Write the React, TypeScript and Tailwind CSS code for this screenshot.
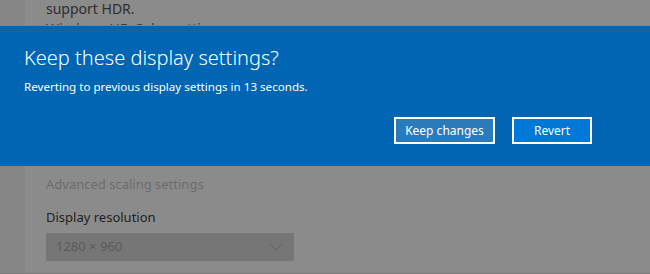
import React from 'react';

const font = { fontFamily: '"Segoe UI", "Noto Sans", "Open Sans", sans-serif' };

const Strip: React.FC<{ children: React.ReactNode; className?: string }> = ({ children, className }) => (
  <div className={`flex ${className ?? ''}`}>
    <div className="w-[25px] shrink-0 bg-[#868686]" />
    <div className="flex-1 bg-[#8b8b8b] pl-[21px] overflow-hidden">{children}</div>
  </div>
);

export default function App() {
  return (
    <div className="w-[650px] h-[274px] flex flex-col overflow-hidden bg-[#8b8b8b]" style={font}>
      {/* page behind the dialog, top part (second line is hidden under the band) */}
      <Strip className="h-[25px]">
        <p className="text-[14px] leading-[19px] text-[#2e2e2e] -mt-[1px]">support HDR.</p>
        <p className="text-[14px] leading-[19px] text-[#3a3a3a] mt-[1px]">Windows HD Color settings</p>
      </Strip>

      {/* dialog band */}
      <div className="h-[141px] shrink-0 bg-[#0066b3] border-t border-[#7a8590] px-[24px] flex flex-col">
        <h1 className="text-[20px] leading-[26px] text-white font-light mt-[19px]">Keep these display settings?</h1>
        <p className="text-[11.6px] leading-[16px] text-white mt-[8px]">
          Reverting to previous display settings in 13 seconds.
        </p>
        <div className="flex justify-end gap-[17px] mt-[22px] pr-[34px]">
          <button className="w-[101px] h-[27px] border-2 border-white bg-[#2a7bbb] text-white text-[12px]">
            Keep changes
          </button>
          <button className="w-[80px] h-[27px] border-2 border-white bg-[#0078d7] text-white text-[12px]">
            Revert
          </button>
        </div>
      </div>

      {/* page behind the dialog, bottom part */}
      <Strip className="flex-1 border-b border-[#7a7a7a]">
        <p className="text-[13px] leading-[18px] text-[#6b6b6b] mt-[9px]">Advanced scaling settings</p>
        <p className="text-[13px] leading-[18px] text-[#1f1f1f] mt-[15px]">Display resolution</p>
        <div className="mt-[7px] w-[248px] h-[28px] bg-[#767676] flex items-center justify-between pl-[10px] pr-[12px]">
          <span className="text-[13px] text-[#5a5a5a]">1280 × 960</span>
          <svg width="12" height="7" viewBox="0 0 12 7" fill="none">
            <path d="M0.5 0.5 L6 6 L11.5 0.5" stroke="#5e5e5e" strokeWidth="1" />
          </svg>
        </div>
      </Strip>
    </div>
  );
}
